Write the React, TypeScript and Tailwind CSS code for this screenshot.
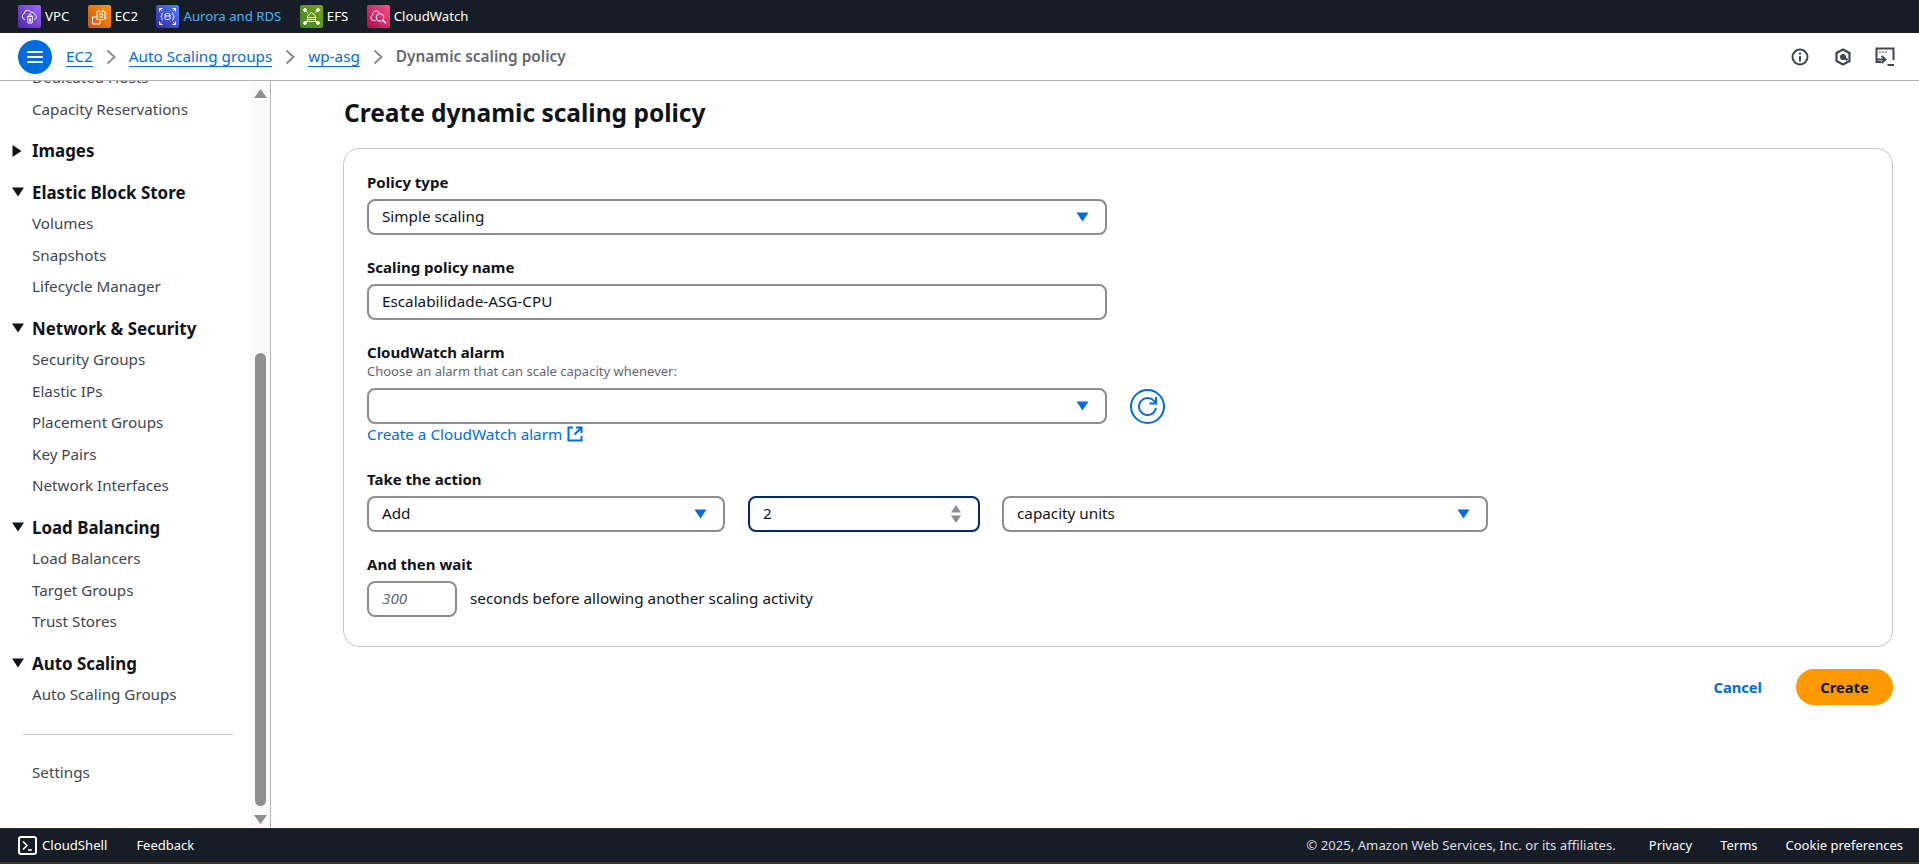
import React from "react";

const F = { fontFamily: '"Noto Sans", sans-serif' };

function Tile({ c1, c2, children }: { c1: string; c2: string; children: React.ReactNode }) {
  const id = "g" + c1.slice(1);
  return (
    <svg width="23" height="23" viewBox="0 0 23 23" className="shrink-0">
      <defs>
        <linearGradient id={id} x1="0" y1="1" x2="1" y2="0">
          <stop offset="0" stopColor={c1} />
          <stop offset="1" stopColor={c2} />
        </linearGradient>
      </defs>
      <rect width="23" height="23" rx="2" fill={`url(#${id})`} />
      <g fill="none" stroke="#fff" strokeWidth="1">{children}</g>
    </svg>
  );
}

function Fav({ icon, label, cls = "text-white", mr }: { icon: React.ReactNode; label: string; cls?: string; mr: string }) {
  return (
    <div className={`flex items-center gap-[4px] ${mr}`}>
      {icon}
      <span className={`text-[13.2px] ${cls}`}>{label}</span>
    </div>
  );
}

function Caret() {
  return (
    <svg width="13" height="10" viewBox="0 0 13 10" className="shrink-0">
      <path d="M0.5 .5h12L6.5 9.5z" fill="#006ce0" />
    </svg>
  );
}

function Chev() {
  return (
    <svg width="12" height="16" viewBox="0 0 12 16" className="mx-[12px] shrink-0">
      <path d="M2.5 1.5 9.5 8l-7 6.5" fill="none" stroke="#8c8c94" strokeWidth="2" />
    </svg>
  );
}

function Label({ children }: { children: React.ReactNode }) {
  return <div className="h-[20px] pb-[2px] text-[15px] leading-[18px] font-bold text-[#0f141a]">{children}</div>;
}

function Box({ children, w, focus }: { children?: React.ReactNode; w: string; focus?: boolean }) {
  return (
    <div
      className={`${w} h-[36px] shrink-0 flex items-center justify-between pl-[13px] pr-[16px] rounded-[8px] border-2 bg-white text-[15.25px] leading-[20px] text-[#0f141a] [&>span]:pb-[2px] ${
        focus ? "border-[#002a66]" : "border-[#8c8c94]"
      }`}
    >
      {children}
    </div>
  );
}

function Head({ label, open = true }: { label: string; open?: boolean }) {
  return (
    <div className="h-[31.5px] flex items-center">
      <span className="w-[32px] pl-[12px] shrink-0">
        {open ? (
          <svg width="12" height="10" viewBox="0 0 12 10">
            <path d="M0 .5h12L6 9.5z" fill="#0f141a" />
          </svg>
        ) : (
          <svg width="10" height="12" viewBox="0 0 10 12">
            <path d="M.5 0v12L9.5 6z" fill="#0f141a" />
          </svg>
        )}
      </span>
      <span className="text-[16.9px] font-bold text-[#0f141a] whitespace-nowrap">{label}</span>
    </div>
  );
}

function Item({ label }: { label: string }) {
  return <div className="h-[31.5px] flex items-center pl-[32px] text-[15.2px] text-[#424650] whitespace-nowrap">{label}</div>;
}

function Section({ head, items, open = true }: { head: string; items: string[]; open?: boolean }) {
  return (
    <div className="mb-[10px]">
      <Head label={head} open={open} />
      {items.map((i) => (
        <Item key={i} label={i} />
      ))}
    </div>
  );
}

export default function App() {
  return (
    <div className="h-screen w-full flex flex-col overflow-hidden bg-white" style={F}>
      <div className="h-[33px] shrink-0 bg-[#161d26] flex items-center pl-[18px]">
        <Fav
          mr="mr-[18.5px]"
          label="VPC"
          icon={
            <Tile c1="#4d27a8" c2="#a166ff">
              <path d="M7 14.5a3 3 0 0 1-.8-5.8 3.4 3.4 0 0 1 3.3-3.4c1.5 0 2.8.8 3.4 2.1 1.6-.5 3.6.5 3.8 2.3 1 .4 1.6 1.3 1.6 2.2 0 1.3-.8 2.2-2 2.5" />
              <path d="M9.5 11.5h5l-.5 6.5h-4zM11 11.5V10a1 1 0 0 1 2 0v1.5M11.5 13.5v3M12.5 13.5v3" />
            </Tile>
          }
        />
        <Fav
          mr="mr-[18.5px]"
          label="EC2"
          icon={
            <Tile c1="#c8511b" c2="#ff9900">
              <path d="M9 12H4.5v7H12v-4.5" />
              <rect x="9" y="6.5" width="8" height="8" />
              <rect x="11.5" y="9" width="3" height="3" />
              <path d="M11 6.5V4.5M15 6.5V4.5M17 8.5h2M17 12.5h2" />
            </Tile>
          }
        />
        <Fav
          mr="mr-[18.5px]"
          label="Aurora and RDS"
          cls="text-[#42b4ff]"
          icon={
            <Tile c1="#2e27ad" c2="#527fff">
              <path d="M3.5 6.5v-3h3M3.5 3.5l2.5 2.5M16.5 3.5h3v3M19.5 3.5 17 6M3.5 16.5v3h3M3.5 19.5 6 17M19.5 16.5v3h-3M19.5 19.5 17 17" />
              <path d="M7 8c-1 0-1.2.6-1.2 1.5s-.3 2-1 2c.7 0 1 1 1 2S6 15 7 15M16 8c1 0 1.2.6 1.2 1.5s.3 2 1 2c-.7 0-1 1-1 2S17 15 16 15" />
              <rect x="9" y="8.5" width="5" height="6" rx="1.5" />
              <path d="M9 10.5c1 .7 4 .7 5 0" />
            </Tile>
          }
        />
        <Fav
          mr="mr-[18.5px]"
          label="EFS"
          icon={
            <Tile c1="#3f8624" c2="#7aa116">
              <circle cx="5" cy="5" r="1.4" fill="#fff" />
              <circle cx="18" cy="5" r="1.4" fill="#fff" />
              <circle cx="5" cy="18" r="1.4" fill="#fff" />
              <circle cx="18" cy="18" r="1.4" fill="#fff" />
              <path d="m6 6 2 2M17 6l-2 2M6 17l1.5-1.5M17 17l-1.5-1.5" />
              <path d="M7.5 16.5V11L11.5 7.5l4 3.5v5.5zM7.5 12.5h8M7.5 14.5h8" />
            </Tile>
          }
        />
        <Fav
          mr=""
          label="CloudWatch"
          icon={
            <Tile c1="#b0084d" c2="#ff4f8b">
              <path d="M9 15.5H6.5a2.8 2.8 0 0 1-.8-5.4A3.5 3.5 0 0 1 9.5 6c1.4 0 2.6.8 3.2 2.2" />
              <circle cx="13" cy="12.5" r="3.8" />
              <path d="m15.8 15.3 3 3" strokeWidth="1.5" />
            </Tile>
          }
        />
      </div>

      <div className="h-[48px] shrink-0 bg-white border-b border-[#b4b4bb] flex items-center pl-[18px] pr-[24px]">
        <div className="w-[34px] h-[34px] rounded-full bg-[#006ce0] flex flex-col items-center justify-center gap-[3px] mr-[14px] shrink-0">
          <span className="block w-[16px] h-[2px] bg-white rounded" />
          <span className="block w-[16px] h-[2px] bg-white rounded" />
          <span className="block w-[16px] h-[2px] bg-white rounded" />
        </div>
        <span className="text-[15.25px] text-[#006ce0] border-b border-[#006ce0] leading-[20px]">EC2</span>
        <Chev />
        <span className="text-[15.25px] text-[#006ce0] border-b border-[#006ce0] leading-[20px]">Auto Scaling groups</span>
        <Chev />
        <span className="text-[15.25px] text-[#006ce0] border-b border-[#006ce0] leading-[20px]">wp-asg</span>
        <Chev />
        <span className="text-[15.4px] font-semibold text-[#656871]">Dynamic scaling policy</span>
        <div className="ml-auto flex items-center">
          <svg width="18" height="18" viewBox="0 0 18 18" fill="none" stroke="#424650" strokeWidth="2" className="mr-[25px]">
            <circle cx="9" cy="9" r="7.5" />
            <path d="M9 8v5.5M9 4.5v2" />
          </svg>
          <svg width="18" height="18" viewBox="0 0 18 18" fill="none" stroke="#424650" strokeWidth="2.2" className="mr-[23px]">
            <path d="M9 1.5 15.5 5v8L9 16.5 2.5 13V5z" />
            <circle cx="9" cy="9" r="2.6" fill="#424650" strokeWidth="1" />
            <path d="m9 9 4.5 3" />
          </svg>
          <svg width="20" height="20" viewBox="0 0 20 20" fill="none" stroke="#424650" strokeWidth="2">
            <path d="M6 15H1.5V1.5h17V13" />
            <path d="M4.5 5h1M7.5 5h1M10.5 5h1" />
            <path d="M6.5 9l4 3.5-4 3.5M1 12.5h9" />
            <path d="M12.5 18h6.5" />
          </svg>
        </div>
      </div>

      <div className="flex-1 min-h-0 flex">
        <div className="w-[271px] shrink-0 border-r border-[#b4b4bb] flex overflow-hidden">
          <div className="flex-1 min-w-0 overflow-hidden">
            <div className="-mt-[19px]">
              <Item label="Dedicated Hosts" />
              <Item label="Capacity Reservations" />
              <div className="h-[10px]" />
              <Section head="Images" items={[]} open={false} />
              <Section head="Elastic Block Store" items={["Volumes", "Snapshots", "Lifecycle Manager"]} />
              <Section
                head="Network & Security"
                items={["Security Groups", "Elastic IPs", "Placement Groups", "Key Pairs", "Network Interfaces"]}
              />
              <Section head="Load Balancing" items={["Load Balancers", "Target Groups", "Trust Stores"]} />
              <Section head="Auto Scaling" items={["Auto Scaling Groups"]} />
              <div className="h-[13px]" />
              <div className="ml-[23px] w-[210px] h-px bg-[#c6c6cd]" />
              <div className="h-[22px]" />
              <Item label="Settings" />
            </div>
          </div>
          <div className="w-[19px] shrink-0 bg-[#fafafa] flex flex-col items-center">
            <svg width="13" height="9" viewBox="0 0 13 9" className="mt-[8px] shrink-0">
              <path d="M0 9 6.5 0 13 9z" fill="#8f8f8f" />
            </svg>
            <div className="w-[11px] mt-[255px] h-[453px] rounded-full bg-[#8f8f8f] shrink-0" />
            <svg width="13" height="9" viewBox="0 0 13 9" className="mt-[9px] shrink-0">
              <path d="M0 0h13L6.5 9z" fill="#8f8f8f" />
            </svg>
          </div>
        </div>

        <div className="flex-1 min-w-0 pl-[72px] pr-[26px]">
          <h1 className="h-[67px] pt-[14px] pl-[1px] text-[24.5px] leading-[36px] font-bold text-[#0f141a]">Create dynamic scaling policy</h1>
          <div className="h-[499px] rounded-[16px] border border-[#c6c6cd] pl-[23px] pt-[24px]">
            <Label>Policy type</Label>
            <div className="h-[6px]" />
            <Box w="w-[740px]">
              <span>Simple scaling</span>
              <Caret />
            </Box>
            <div className="h-[23px]" />
            <Label>Scaling policy name</Label>
            <div className="h-[6px]" />
            <Box w="w-[740px]">
              <span>Escalabilidade-ASG-CPU</span>
            </Box>
            <div className="h-[23px]" />
            <Label>CloudWatch alarm</Label>
            <div className="text-[13px] leading-[16px] text-[#656871] mb-[9px]">Choose an alarm that can scale capacity whenever:</div>
            <div className="flex items-center gap-[23px]">
              <Box w="w-[740px]">
                <span />
                <Caret />
              </Box>
              <svg width="35" height="35" viewBox="0 0 35 35" fill="none" stroke="#006ce0" strokeWidth="2" className="shrink-0">
                <circle cx="17.5" cy="17.5" r="16.5" />
                <path d="M25 13.5a8.5 8.5 0 1 0 .9 5.5" />
                <path d="M26 8v6.5h-6.5" />
              </svg>
            </div>
            <div className="flex items-center gap-[5px] text-[15.25px] leading-[20px] text-[#006ce0] pb-[1px]">
              <span>Create a CloudWatch alarm</span>
              <svg width="16" height="16" viewBox="0 0 16 16" fill="none" stroke="#006ce0" strokeWidth="2">
                <path d="M6 1.5H1.5v13h13V10M9 1.5h5.5V7M14 2 7.5 8.5" />
              </svg>
            </div>
            <div className="h-[25px]" />
            <Label>Take the action</Label>
            <div className="h-[6px]" />
            <div className="flex items-center">
              <Box w="w-[358px]">
                <span>Add</span>
                <Caret />
              </Box>
              <div className="w-[23px]" />
              <Box w="w-[232px]" focus>
                <span>2</span>
                <svg width="12" height="20" viewBox="0 0 12 20" className="shrink-0">
                  <path d="M6 1 11 8.5H1zM6 19 1 11.5h10z" fill="#8c8c94" />
                </svg>
              </Box>
              <div className="w-[22px]" />
              <Box w="w-[486px]">
                <span>capacity units</span>
                <Caret />
              </Box>
            </div>
            <div className="h-[23px]" />
            <Label>And then wait</Label>
            <div className="h-[6px]" />
            <div className="flex items-center gap-[13px]">
              <Box w="w-[90px]">
                <span className="italic text-[#656871]">300</span>
              </Box>
              <span className="text-[15.25px] text-[#0f141a] pb-[2px]">seconds before allowing another scaling activity</span>
            </div>
          </div>
          <div className="flex items-center justify-end mt-[22px]">
            <span className="text-[14.7px] font-bold text-[#006ce0] mr-[34px]">Cancel</span>
            <div className="w-[97px] h-[36px] rounded-full bg-[#ff9900] flex items-center justify-center text-[14.7px] font-bold text-[#0f141a]">
              Create
            </div>
          </div>
        </div>
      </div>

      <div className="h-[34px] shrink-0 bg-[#161d26] border-t border-[#232b37] flex items-center pl-[18px] pr-[16px] text-[13px] text-white">
        <svg width="19" height="19" viewBox="0 0 19 19" fill="none" stroke="#fff" className="mr-[5px] shrink-0">
          <rect x="1" y="1" width="17" height="17" rx="2" strokeWidth="2" />
          <path d="m5 5.5 4 4-4 4M10 14h4" strokeWidth="1.6" />
        </svg>
        <span className="text-[13.15px]">CloudShell</span>
        <span className="ml-[29px]">Feedback</span>
        <span className="ml-auto text-[13.15px] text-[#dedee3]">© 2025, Amazon Web Services, Inc. or its affiliates.</span>
        <span className="ml-[33px]">Privacy</span>
        <span className="ml-[28px]">Terms</span>
        <span className="ml-[28px]">Cookie preferences</span>
      </div>
      <div className="h-[2px] shrink-0 bg-[#3a3330]" />
    </div>
  );
}
